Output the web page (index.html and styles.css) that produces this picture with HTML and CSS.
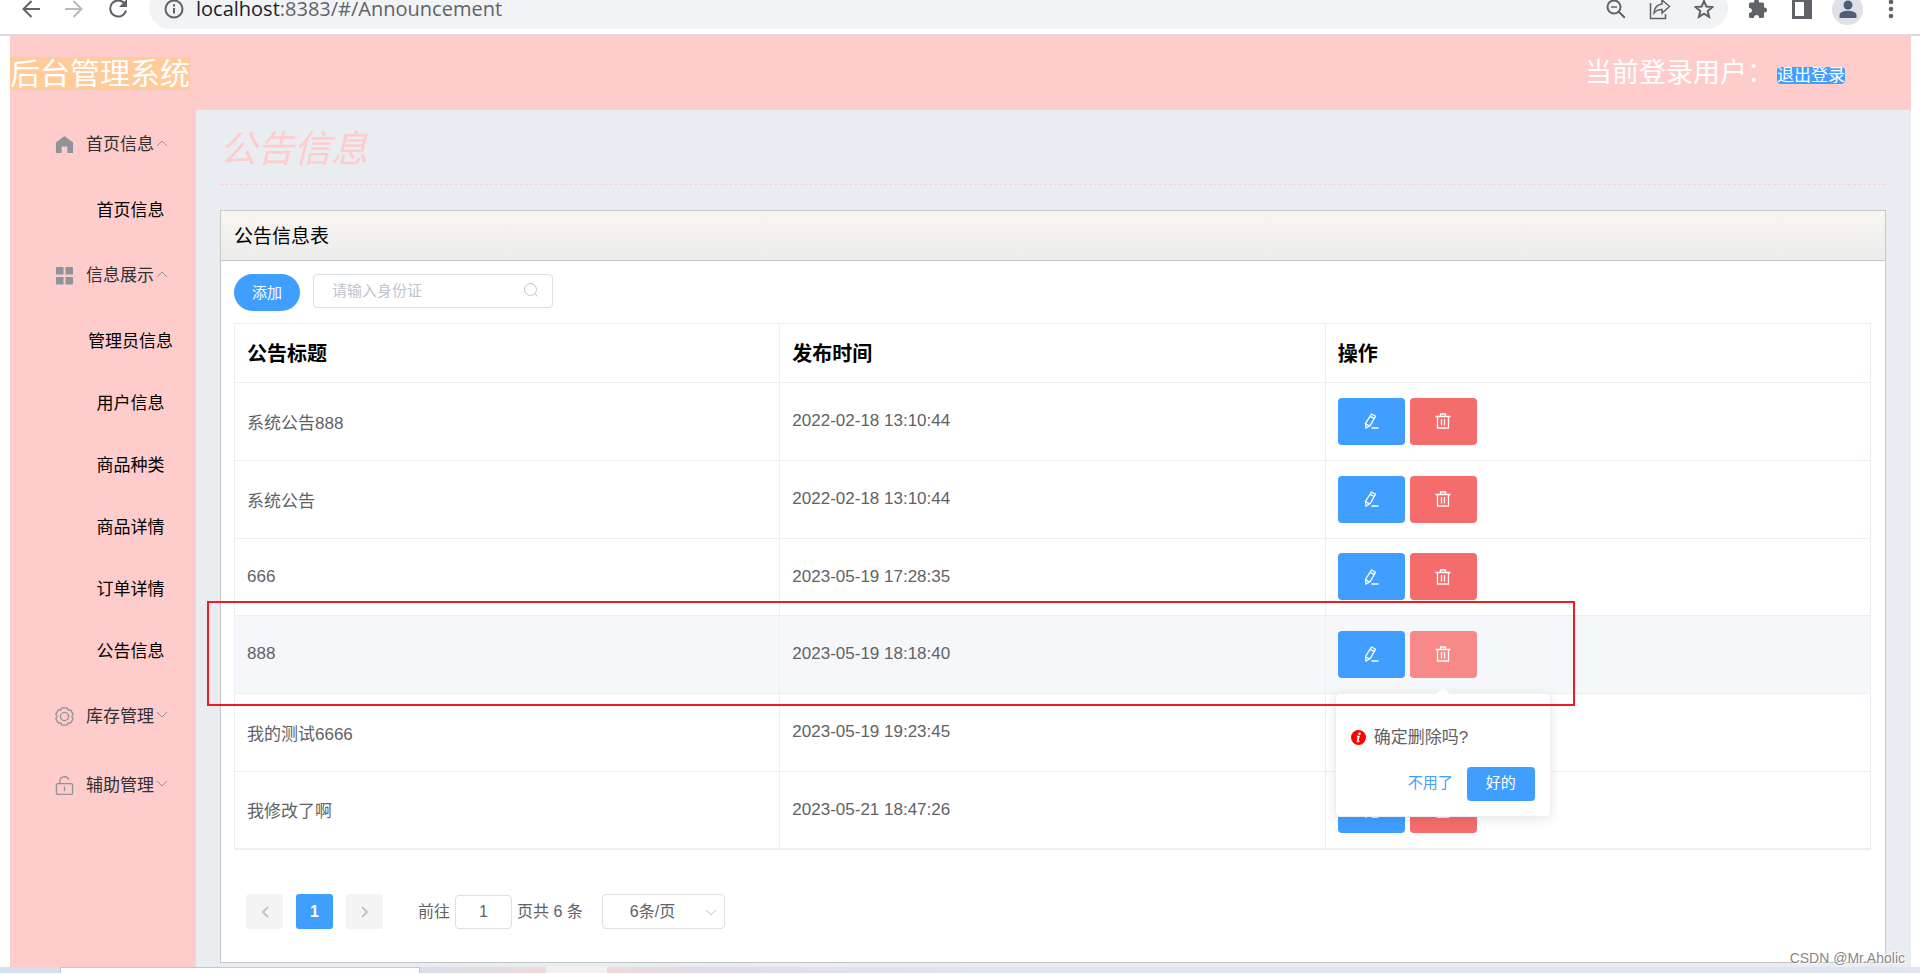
FILE: index.html
```html
<!DOCTYPE html>
<html lang="zh-CN">
<head>
<meta charset="utf-8">
<title>后台管理系统</title>
<link rel="stylesheet" href="styles.css">
</head>
<body>
<svg class="sprite" aria-hidden="true">
  <symbol id="edit" viewBox="0 0 16 16"><path d="M8.500 1l4 2.200-5.300 9.300-4.200 2.500-.5-4.500zM7.300 3.400l4 2.200M2.700 10.800l4.200 2.200M8.500 15h7"/></symbol>
  <symbol id="trash" viewBox="0 0 16 16"><path d="M.5 3.500h15M2.500 3.500v11.500h11V3.500M5.500 3.500V1h5v2.500M6.500 6v6.500M9.500 6v6.500"/></symbol>
  <symbol id="up" viewBox="0 0 12 12"><path d="M1 9l5-5 5 5"/></symbol>
  <symbol id="down" viewBox="0 0 12 12"><path d="M1 3l5 5 5-5"/></symbol>
</svg>

<div class="toolbar">
  <div class="nav">
    <button class="tool" aria-label="后退"><svg width="18" height="18" viewBox="0 0 18 18"><path d="M18 9H2M9.500 1L1.500 9l8 8"/></svg></button>
    <button class="tool dim" aria-label="前进"><svg width="18" height="18" viewBox="0 0 18 18"><path d="M0 9h16M8.500 1l8 8-8 8"/></svg></button>
    <button class="tool" aria-label="刷新"><svg width="20" height="20" viewBox="0 0 20 20"><path d="M16.500 4.500A8 8 0 1 0 18 11.500"/><path class="solid" d="M19 0v8h-8z"/></svg></button>
  </div>
  <div class="omnibox">
    <svg width="20" height="20" viewBox="0 0 20 20"><circle cx="10" cy="10" r="8.500"/><path d="M10 9v5.500M10 5.200v2.200"/></svg>
    <span class="url"><b>localhost</b>:8383/#/Announcement</span>
    <span class="omni-actions">
      <button class="tool" aria-label="缩放"><svg width="20" height="20" viewBox="0 0 20 20"><circle cx="8" cy="8" r="6.500"/><path d="M12.800 12.800l6 6"/><path class="thin" d="M5 8h6"/></svg></button>
      <button class="tool" aria-label="分享"><svg width="22" height="22" viewBox="0 0 22 22"><path class="thin" d="M1.500 5v15.500h15V16M13 2l7.500 6.500L13 15v-3.500c-4 0-6 1-8 3.500.5-5 3-8.500 8-9z"/></svg></button>
      <button class="tool" aria-label="收藏"><svg width="20" height="20" viewBox="0 0 20 20"><path d="M10 2l2.300 5.600 6 .5-4.600 3.900 1.400 5.900L10 14.700l-5.100 3.200L6.300 12 1.700 8.100l6-.5z"/></svg></button>
    </span>
  </div>
  <div class="extras">
    <button class="tool puzzle" aria-label="扩展程序"><svg width="20" height="20" viewBox="0 0 20 20"><path class="solid" d="M1 5q0-1.500 1.500-1.500H6V3a2.500 2.500 0 0 1 5 0v.5h3.500Q16 3.500 16 5v3.500h.500a2.500 2.500 0 0 1 0 5H16V17.500q0 1.500-1.500 1.500H11v-.5a2.500 2.500 0 0 0-5 0v.5H2.500Q1 19 1 17.500V14h.5a2.500 2.500 0 0 0 0-5H1z"/></svg></button>
    <button class="tool" aria-label="侧边栏"><svg width="20" height="20" viewBox="0 0 20 20"><path class="solid" fill-rule="evenodd" d="M0 0h20v20H0zM3 3v14h9V3z"/></svg></button>
    <button class="tool avatar" aria-label="用户"><svg width="20" height="20" viewBox="0 0 20 20"><circle class="solid" cx="10" cy="6" r="4.500"/><path class="solid" d="M1.500 19v-3c0-3 5-4.200 8.500-4.200s8.500 1.200 8.500 4.200v3z"/></svg></button>
    <button class="tool" aria-label="菜单"><svg width="6" height="20" viewBox="0 0 6 20"><circle class="solid" cx="3" cy="3" r="2.300"/><circle class="solid" cx="3" cy="10" r="2.300"/><circle class="solid" cx="3" cy="17" r="2.300"/></svg></button>
  </div>
</div>

<div class="page">
  <header class="header">
    <span class="brand">后台管理系统</span>
    <div class="user"><span>当前登录用户：</span><button class="logout">退出登录</button></div>
  </header>
  <div class="body">
    <nav class="menu">
      <button class="group"><svg class="gi" viewBox="0 0 20 20"><path class="fill" d="M10 1L1 8v11h6v-7h6v7h6V8z"/></svg>首页信息<svg class="arrow"><use href="#up"/></svg></button>
      <a class="item" href="#home">首页信息</a>
      <button class="group"><svg class="gi" viewBox="0 0 20 20"><path class="fill" d="M2 1h6q1 0 1 1v7H1V2q0-1 1-1zM12 1h6q1 0 1 1v7h-8V2q0-1 1-1zM1 11.500h8v8H2q-1 0-1-1zM11 11.500h8v7q0 1-1 1h-7z"/></svg>信息展示<svg class="arrow"><use href="#up"/></svg></button>
      <a class="item" href="#admin">管理员信息</a>
      <a class="item" href="#user">用户信息</a>
      <a class="item" href="#category">商品种类</a>
      <a class="item" href="#goods">商品详情</a>
      <a class="item" href="#order">订单详情</a>
      <a class="item" href="#announcement">公告信息</a>
      <button class="group"><svg class="gi" viewBox="0 0 20 20"><path d="M7.200 1h5.600l1 2.300 2.700-.2L19.200 7.700 17.700 10l1.500 2.300-2.700 4.600-2.700-.2-1 2.300H7.200l-1-2.300-2.700.2L.8 12.300 2.300 10 .8 7.700l2.700-4.600 2.700.2z"/><circle cx="10" cy="10" r="4.300"/></svg>库存管理<svg class="arrow"><use href="#down"/></svg></button>
      <button class="group"><svg class="gi" viewBox="0 0 20 20"><rect x="1.500" y="8" width="17" height="11.500" rx="1.500"/><path d="M5 8V5.500a5 5 0 0 1 9.500-1.800M10 11v5"/></svg>辅助管理<svg class="arrow"><use href="#down"/></svg></button>
    </nav>
    <main class="content">
      <h1>公告信息</h1>
      <section class="card">
        <h2>公告信息表</h2>
        <div class="card-body">
          <div class="filters">
            <button class="add">添加</button>
            <label class="search"><input type="text" placeholder="请输入身份证" aria-label="请输入身份证"><svg width="16" height="16" viewBox="0 0 16 16"><circle cx="7.500" cy="7.500" r="6"/><path d="M12 12l2.500 2.500"/></svg></label>
          </div>
          <table>
            <thead><tr><th>公告标题</th><th>发布时间</th><th>操作</th></tr></thead>
            <tbody>
              <tr><td>系统公告888</td><td>2022-02-18 13:10:44</td><td><div class="ops"><button class="op" aria-label="编辑"><svg><use href="#edit"/></svg></button><button class="op del" aria-label="删除"><svg><use href="#trash"/></svg></button></div></td></tr>
              <tr><td>系统公告</td><td>2022-02-18 13:10:44</td><td><div class="ops"><button class="op" aria-label="编辑"><svg><use href="#edit"/></svg></button><button class="op del" aria-label="删除"><svg><use href="#trash"/></svg></button></div></td></tr>
              <tr><td>666</td><td>2023-05-19 17:28:35</td><td><div class="ops"><button class="op" aria-label="编辑"><svg><use href="#edit"/></svg></button><button class="op del" aria-label="删除"><svg><use href="#trash"/></svg></button></div></td></tr>
              <tr class="current"><td>888<span class="mark"></span></td><td>2023-05-19 18:18:40</td><td><div class="ops"><button class="op" aria-label="编辑"><svg><use href="#edit"/></svg></button><button class="op del" aria-label="删除"><svg><use href="#trash"/></svg></button></div>
                <div class="popover" role="dialog">
                  <p><svg width="15" height="15" viewBox="0 0 15 15"><circle cx="7.500" cy="7.500" r="7.500" fill="#f00"/><circle cx="8.500" cy="3.700" r="1.300" fill="#fff"/><path d="M5.800 6.500h2l-1.300 4.800h1.800" fill="none" stroke="#fff" stroke-width="1.700"/></svg>确定删除吗?</p>
                  <div class="answers"><button class="no">不用了</button><button class="yes">好的</button></div>
                </div></td></tr>
              <tr><td>我的测试6666</td><td>2023-05-19 19:23:45</td><td><div class="ops"><button class="op" aria-label="编辑"><svg><use href="#edit"/></svg></button><button class="op del" aria-label="删除"><svg><use href="#trash"/></svg></button></div></td></tr>
              <tr><td>我修改了啊</td><td>2023-05-21 18:47:26</td><td><div class="ops"><button class="op" aria-label="编辑"><svg><use href="#edit"/></svg></button><button class="op del" aria-label="删除"><svg><use href="#trash"/></svg></button></div></td></tr>
            </tbody>
          </table>
          <div class="pager">
            <button class="pg" aria-label="上一页"><svg width="12" height="14" viewBox="0 0 12 14"><path d="M9 2L4 7l5 5"/></svg></button>
            <button class="pg on">1</button>
            <button class="pg" aria-label="下一页"><svg width="12" height="14" viewBox="0 0 12 14"><path d="M3 2l5 5-5 5"/></svg></button>
            <label class="jump">前往<input type="text" value="1">页共 6 条</label>
            <span class="size"><select aria-label="每页条数"><option>6条/页</option></select><svg><use href="#down"/></svg></span>
          </div>
        </div>
      </section>
    </main>
  </div>
</div>
<div class="desktop"><div class="window"></div><div class="tile"></div></div>
<div class="watermark">CSDN @Mr.Aholic</div>
</body>
</html>
```

FILE: styles.css
```css
* { box-sizing: border-box; }
body {
  margin: 0;
  position: relative;
  background: #fff;
  color: #000;
  font-family: "Liberation Sans", "Noto Sans CJK SC", sans-serif;
  font-size: 17px;
}
button, input, select { font-family: inherit; margin: 0; }
button { border: 0; padding: 0; background: none; cursor: pointer; }
svg { fill: none; stroke: currentColor; flex: none; }
.sprite { display: none; }

/* browser toolbar */
.toolbar {
  height: 36px;
  padding: 0 26px 5px 22px;
  border-bottom: 2px solid #dadcdc;
  overflow: hidden;
  display: flex;
  align-items: flex-end;
  color: #5f6368;
}
.nav, .extras, .omnibox { flex: none; height: 42px; padding-top: 2px; display: flex; align-items: center; }
.tool { display: flex; color: inherit; }
.toolbar svg { stroke-width: 2; }
.toolbar .thin { stroke-width: 1.5; }
.toolbar .solid { fill: currentColor; stroke: none; }
.nav { gap: 25px; margin-right: 21px; }
.dim { color: #b8babd; }
.toolbar .omnibox {
  flex: 1;
  padding: 2px 14px 0 15px;
  background: #f1f3f4;
  border-radius: 21px;
}
.url { margin-left: 12px; font: 20px/18px "Open Sans", sans-serif; }
.url b { font-weight: 400; color: #202124; }
.omni-actions { margin-left: auto; display: flex; align-items: center; gap: 23px; }
.extras { margin-left: 20px; gap: 20px; }
.puzzle { margin-right: 4px; }
.avatar {
  width: 31px;
  height: 31px;
  margin-right: 5px;
  border-radius: 50%;
  align-items: center;
  justify-content: center;
  background: #dee1e6;
  color: #525d73;
}

/* page frame */
.page { margin: 0 9px 0 10px; }
.header {
  height: 74px;
  padding: 0 66px 0 0;
  display: flex;
  align-items: center;
  justify-content: space-between;
  background: #fcc;
  color: #fff;
}
.brand { background: #fc9; font-size: 30px; line-height: 33px; }
.user { display: flex; align-items: center; gap: 3px; font-size: 27px; line-height: 34px; }
.logout {
  margin-top: 5px;
  background: #409eff;
  border-radius: 4px;
  color: #fff;
  font-size: 17px;
  line-height: 17px;
}
.body { display: flex; background: #e9edf2; }

/* side menu */
.menu { width: 186px; flex: none; background: #fcc; }
.group {
  width: 100%;
  height: 69px;
  padding: 0 0 4px 45px;
  display: flex;
  align-items: center;
  color: #303133;
  font-size: 17px;
}
.gi { width: 19px; height: 19px; margin: 3px 12px 0 0; color: #909399; stroke-width: 1.4; }
.gi .fill { fill: currentColor; stroke: none; }
.arrow { width: 12px; height: 12px; margin-left: 2px; color: #909399; }
.item {
  height: 62px;
  padding: 0 0 4px 55px;
  display: flex;
  align-items: center;
  justify-content: center;
  color: #000;
  text-decoration: none;
}

/* content */
.content { flex: 1; min-width: 0; padding: 0 25px 4px 24px; }
h1 {
  height: 75px;
  margin: 0 0 25px;
  padding-top: 12px;
  border-bottom: 1px dashed #fcc;
  color: #fcc;
  font-size: 37px;
  font-weight: 400;
  font-style: italic;
  line-height: 56px;
}
.card { border: 1px solid #c4c6c8; background: #fff; }
h2 {
  height: 50px;
  margin: 0;
  padding: 0 13px;
  border-bottom: 1px solid #c4c6c8;
  background: linear-gradient(#f9f6f1, #ececec);
  font-size: 19px;
  font-weight: 400;
  line-height: 52px;
}
.card-body { padding: 13px 14px 33px 13px; }
.filters { display: flex; align-items: flex-start; gap: 13px; margin-bottom: 12px; }
.add {
  width: 66px;
  height: 37px;
  padding-bottom: 2px;
  border-radius: 20px;
  background: #409eff;
  color: #fff;
  font-size: 15px;
}
.search {
  width: 240px;
  height: 34px;
  padding: 0 13px 2px 18px;
  display: flex;
  align-items: center;
  border: 1px solid #dcdfe6;
  border-radius: 4px;
  color: #c0c4cc;
}
.search input { flex: 1; min-width: 0; border: 0; padding: 0; outline: 0; font-size: 15px; }
.search input::placeholder { color: #c0c4cc; }

table {
  width: 100%;
  table-layout: fixed;
  border-collapse: separate;
  border-spacing: 0;
  border-left: 1px solid #ebeef5;
  border-top: 1px solid #ebeef5;
  border-bottom: 1px solid #ebeef5;
  color: #606266;
}
th, td {
  position: relative;
  padding: 0 12px 1px;
  border-right: 1px solid #ebeef5;
  border-bottom: 1px solid #ebeef5;
  text-align: left;
}
th { height: 59px; padding-bottom: 2px; color: #000; font-size: 20px; }
td { height: 78px; }
tr:nth-child(3n) td { height: 77px; }
.current td { background: #f5f7fa; }
.ops { display: flex; gap: 5px; }
.op {
  width: 67px;
  height: 47px;
  display: flex;
  align-items: center;
  justify-content: center;
  border-radius: 4px;
  background: #409eff;
  color: #fff;
}
.op svg { width: 16px; height: 16px; stroke-width: 1.3; }
.del { background: #f56c6c; }
.current .del { background: #f78989; }

.mark {
  position: absolute;
  z-index: 3;
  left: -28px;
  top: -15px;
  width: 1368px;
  height: 105px;
  border: 2px solid #ed1c24;
  pointer-events: none;
}
.popover {
  position: absolute;
  z-index: 2;
  left: 9px;
  top: 77px;
  width: 216px;
  padding: 31px 15px 15px;
  border: 1px solid #ebeef5;
  border-radius: 4px;
  background: #fff;
  box-shadow: 0 2px 12px rgba(0, 0, 0, .1);
}
.popover::before {
  content: "";
  position: absolute;
  left: 100px;
  top: -6px;
  border: 7px solid transparent;
  border-top: 0;
  border-bottom: 6px solid #fff;
}
.popover p { margin: 0 0 17px; display: flex; align-items: center; gap: 8px; line-height: 25px; }
.popover p svg { stroke: none; }
.answers { display: flex; justify-content: flex-end; gap: 14px; font-size: 15px; }
.no, .yes { height: 34px; padding-bottom: 5px; font-size: 15px; }
.no { color: #409eff; }
.yes { width: 68px; border-radius: 4px; background: #409eff; color: #fff; }

/* pagination */
.pager { margin: 44px 0 0 12px; display: flex; align-items: center; color: #606266; }
.pg {
  width: 37px;
  height: 35px;
  margin-right: 13px;
  display: flex;
  align-items: center;
  justify-content: center;
  border-radius: 3px;
  background: #f4f4f5;
  color: #c0c4cc;
  font-size: 16px;
  font-weight: 700;
}
.pg svg { stroke-width: 2; }
.on { background: #409eff; color: #fff; }
.jump { margin: 0 19px 0 22px; display: flex; align-items: center; gap: 5px; font-size: 16px; line-height: 34px; }
.jump input {
  width: 57px;
  height: 34px;
  padding: 0;
  border: 1px solid #dcdfe6;
  border-radius: 4px;
  color: #606266;
  font-size: 16px;
  text-align: center;
}
.size { position: relative; display: flex; }
.size select {
  appearance: none;
  width: 123px;
  height: 35px;
  padding: 0 0 0 27px;
  border: 1px solid #dcdfe6;
  border-radius: 4px;
  background: #fff;
  color: #606266;
  font-size: 16px;
}
.size svg { position: absolute; right: 8px; top: 13px; width: 12px; height: 12px; color: #c0c4cc; pointer-events: none; }

/* desktop strip under the browser window */
.desktop {
  height: 6px;
  padding-left: 60px;
  display: flex;
  background: linear-gradient(90deg, #d6e1ed 0, #d9dfeb 22%, #eddadd 28%, #eddadd 32%, #e3dae8 36%, #dde5f0 50%, #dde5f0 100%);
}
.window { width: 360px; border: 1px solid #c4c6c8; border-bottom: 0; background: #fff; }
.tile { width: 61px; margin-left: 126px; background: #f5f0f0; }
.watermark {
  position: absolute;
  right: 15px;
  bottom: 6px;
  color: #888;
  font-size: 14px;
  line-height: 18px;
  text-shadow: 1px 1px 0 #fff, -1px -1px 0 #fff;
}
```
